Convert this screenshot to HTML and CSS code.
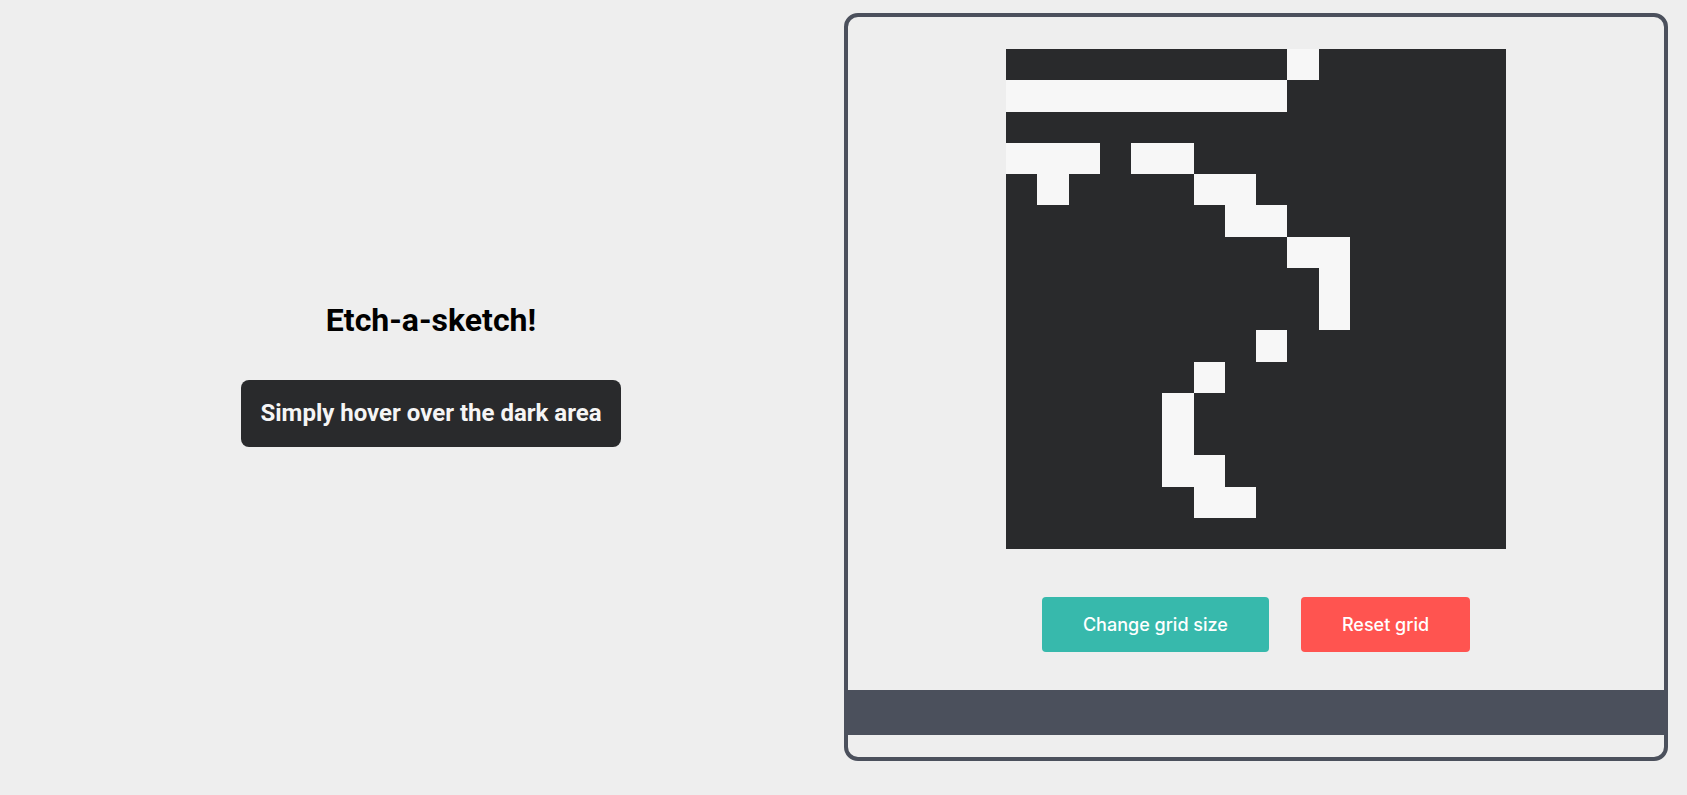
FILE: index.html
```html
<!DOCTYPE html>
<html lang="en">
<head>
<meta charset="utf-8">
<title>Etch-a-sketch</title>
<link rel="stylesheet" href="styles.css">
</head>
<body>
<main class="page">
  <section class="intro">
    <h1 class="title">Etch-a-sketch!</h1>
    <p class="hint">Simply hover over the dark area</p>
  </section>
  <section class="panel">
    <div class="board">
      <div class="c"></div><div class="c"></div><div class="c"></div><div class="c"></div><div class="c"></div><div class="c"></div><div class="c"></div><div class="c"></div><div class="c"></div><div class="c w"></div><div class="c"></div><div class="c"></div><div class="c"></div><div class="c"></div><div class="c"></div><div class="c"></div>
      <div class="c w"></div><div class="c w"></div><div class="c w"></div><div class="c w"></div><div class="c w"></div><div class="c w"></div><div class="c w"></div><div class="c w"></div><div class="c w"></div><div class="c"></div><div class="c"></div><div class="c"></div><div class="c"></div><div class="c"></div><div class="c"></div><div class="c"></div>
      <div class="c"></div><div class="c"></div><div class="c"></div><div class="c"></div><div class="c"></div><div class="c"></div><div class="c"></div><div class="c"></div><div class="c"></div><div class="c"></div><div class="c"></div><div class="c"></div><div class="c"></div><div class="c"></div><div class="c"></div><div class="c"></div>
      <div class="c w"></div><div class="c w"></div><div class="c w"></div><div class="c"></div><div class="c w"></div><div class="c w"></div><div class="c"></div><div class="c"></div><div class="c"></div><div class="c"></div><div class="c"></div><div class="c"></div><div class="c"></div><div class="c"></div><div class="c"></div><div class="c"></div>
      <div class="c"></div><div class="c w"></div><div class="c"></div><div class="c"></div><div class="c"></div><div class="c"></div><div class="c w"></div><div class="c w"></div><div class="c"></div><div class="c"></div><div class="c"></div><div class="c"></div><div class="c"></div><div class="c"></div><div class="c"></div><div class="c"></div>
      <div class="c"></div><div class="c"></div><div class="c"></div><div class="c"></div><div class="c"></div><div class="c"></div><div class="c"></div><div class="c w"></div><div class="c w"></div><div class="c"></div><div class="c"></div><div class="c"></div><div class="c"></div><div class="c"></div><div class="c"></div><div class="c"></div>
      <div class="c"></div><div class="c"></div><div class="c"></div><div class="c"></div><div class="c"></div><div class="c"></div><div class="c"></div><div class="c"></div><div class="c"></div><div class="c w"></div><div class="c w"></div><div class="c"></div><div class="c"></div><div class="c"></div><div class="c"></div><div class="c"></div>
      <div class="c"></div><div class="c"></div><div class="c"></div><div class="c"></div><div class="c"></div><div class="c"></div><div class="c"></div><div class="c"></div><div class="c"></div><div class="c"></div><div class="c w"></div><div class="c"></div><div class="c"></div><div class="c"></div><div class="c"></div><div class="c"></div>
      <div class="c"></div><div class="c"></div><div class="c"></div><div class="c"></div><div class="c"></div><div class="c"></div><div class="c"></div><div class="c"></div><div class="c"></div><div class="c"></div><div class="c w"></div><div class="c"></div><div class="c"></div><div class="c"></div><div class="c"></div><div class="c"></div>
      <div class="c"></div><div class="c"></div><div class="c"></div><div class="c"></div><div class="c"></div><div class="c"></div><div class="c"></div><div class="c"></div><div class="c w"></div><div class="c"></div><div class="c"></div><div class="c"></div><div class="c"></div><div class="c"></div><div class="c"></div><div class="c"></div>
      <div class="c"></div><div class="c"></div><div class="c"></div><div class="c"></div><div class="c"></div><div class="c"></div><div class="c w"></div><div class="c"></div><div class="c"></div><div class="c"></div><div class="c"></div><div class="c"></div><div class="c"></div><div class="c"></div><div class="c"></div><div class="c"></div>
      <div class="c"></div><div class="c"></div><div class="c"></div><div class="c"></div><div class="c"></div><div class="c w"></div><div class="c"></div><div class="c"></div><div class="c"></div><div class="c"></div><div class="c"></div><div class="c"></div><div class="c"></div><div class="c"></div><div class="c"></div><div class="c"></div>
      <div class="c"></div><div class="c"></div><div class="c"></div><div class="c"></div><div class="c"></div><div class="c w"></div><div class="c"></div><div class="c"></div><div class="c"></div><div class="c"></div><div class="c"></div><div class="c"></div><div class="c"></div><div class="c"></div><div class="c"></div><div class="c"></div>
      <div class="c"></div><div class="c"></div><div class="c"></div><div class="c"></div><div class="c"></div><div class="c w"></div><div class="c w"></div><div class="c"></div><div class="c"></div><div class="c"></div><div class="c"></div><div class="c"></div><div class="c"></div><div class="c"></div><div class="c"></div><div class="c"></div>
      <div class="c"></div><div class="c"></div><div class="c"></div><div class="c"></div><div class="c"></div><div class="c"></div><div class="c w"></div><div class="c w"></div><div class="c"></div><div class="c"></div><div class="c"></div><div class="c"></div><div class="c"></div><div class="c"></div><div class="c"></div><div class="c"></div>
      <div class="c"></div><div class="c"></div><div class="c"></div><div class="c"></div><div class="c"></div><div class="c"></div><div class="c"></div><div class="c"></div><div class="c"></div><div class="c"></div><div class="c"></div><div class="c"></div><div class="c"></div><div class="c"></div><div class="c"></div><div class="c"></div>
    </div>
    <div class="actions">
      <button class="btn btn-size" type="button">Change grid size</button>
      <button class="btn btn-reset" type="button">Reset grid</button>
    </div>
    <div class="bar"></div>
  </section>
</main>
</body>
</html>
```
FILE: styles.css
```css
* { box-sizing: border-box; }

html, body {
  margin: 0;
  padding: 0;
  background: #eeeeee;
}

body {
  font-family: Roboto, "Liberation Sans", Arial, sans-serif;
}

.page {
  display: flex;
  align-items: flex-start;
  padding: 13px 0 0 18px;
}

.intro {
  width: 826px;
  flex: none;
  display: flex;
  flex-direction: column;
  align-items: center;
  padding-top: 288px;
}

.title {
  margin: 0;
  font-family: Roboto, "Liberation Sans", sans-serif;
  font-weight: 700;
  font-size: 32px;
  line-height: normal;
  color: #000000;
}

.hint {
  margin: 41px 0 0;
  height: 67px;
  padding: 0 19px;
  line-height: 67px;
  background: #292a2c;
  color: #f5f5f5;
  border-radius: 8px;
  font-family: Roboto, "Liberation Sans", sans-serif;
  font-weight: 700;
  font-size: 24px;
  white-space: nowrap;
}

.panel {
  width: 824px;
  flex: none;
  border: 4px solid #4b505c;
  border-radius: 14px;
  padding: 32px 0 22px;
  display: flex;
  flex-direction: column;
  align-items: center;
}

.board {
  width: 500px;
  height: 500px;
  display: grid;
  grid-template-columns: repeat(16, 1fr);
  grid-template-rows: repeat(16, 1fr);
  background: #292a2c;
}

.c { background: #292a2c; }
.c.w { background: #f7f7f7; }

.actions {
  margin-top: 48px;
  display: flex;
  gap: 32px;
}

.btn {
  height: 55px;
  padding: 0 41px;
  border: none;
  border-radius: 4px;
  color: #ffffff;
  font-family: Inter, "Noto Sans", sans-serif;
  font-weight: 500;
  font-size: 18px;
  cursor: pointer;
}

.btn-size { background: #37b9ac; }
.btn-reset { background: #ff5450; }

.bar {
  align-self: stretch;
  margin-top: 38px;
  height: 45px;
  background: #4b505c;
}
```
